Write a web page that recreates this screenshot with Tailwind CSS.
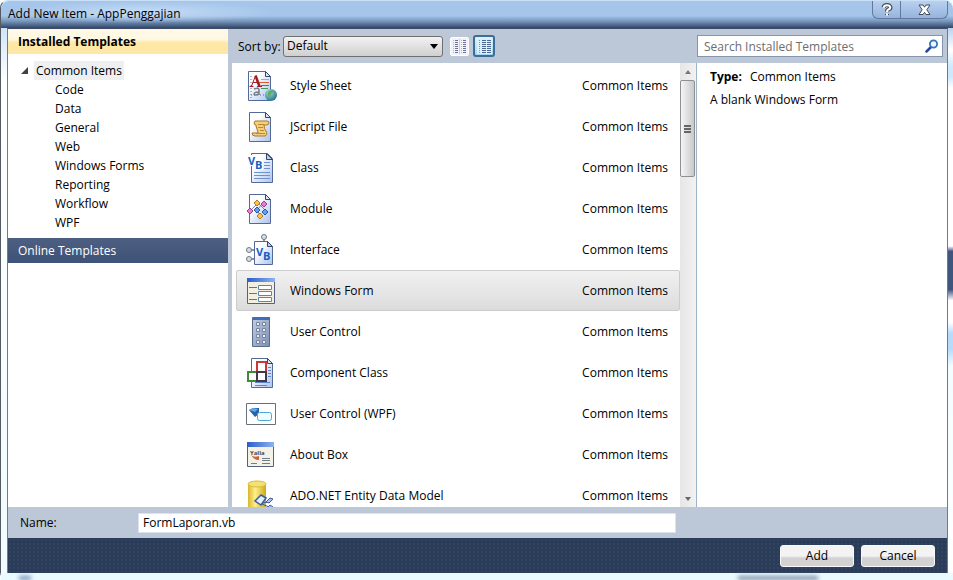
<!DOCTYPE html>
<html lang="en">
  <head>
    <meta charset="UTF-8" />
    <meta name="viewport" content="width=device-width, initial-scale=1.0" />
    <title>Add New Item - AppPenggajian</title>
    <script src="https://cdn.jsdelivr.net/npm/@tailwindcss/browser@4"></script>
  </head>
  <body class="h-screen overflow-hidden bg-[#f4fdff] font-['Open_Sans',sans-serif] text-[12px] leading-[19px] text-black">
    <!-- shared gradients for the file icons -->
    <svg class="absolute" width="0" height="0" aria-hidden="true">
      <defs>
        <linearGradient id="page" x1="0" y1="0" x2="1" y2="1">
          <stop offset="0.3" stop-color="#ffffff" />
          <stop offset="1" stop-color="#a9c2f0" />
        </linearGradient>
        <linearGradient id="bar" x1="0" x2="1">
          <stop offset="0" stop-color="#2b5ccc" />
          <stop offset="1" stop-color="#8db2f3" />
        </linearGradient>
        <linearGradient id="gold" x1="0" x2="1">
          <stop offset="0" stop-color="#d9b72c" />
          <stop offset="0.4" stop-color="#fff08a" />
          <stop offset="1" stop-color="#cda81c" />
        </linearGradient>
        <linearGradient id="steel" x1="0" x2="1" y2="1">
          <stop offset="0" stop-color="#c3cfe2" />
          <stop offset="1" stop-color="#7c8fb4" />
        </linearGradient>
        <radialGradient id="globe" cx="0.35" cy="0.3" r="0.8">
          <stop offset="0" stop-color="#9fe0d2" />
          <stop offset="1" stop-color="#1d6a8c" />
        </radialGradient>
      </defs>
    </svg>

    <div class="flex h-full flex-col rounded-t-lg rounded-bl-lg border-l border-t border-l-[#555a62] border-t-[#c9e0f7]">
      <header class="flex h-[27px] shrink-0 items-start justify-between rounded-t-lg bg-linear-to-b from-[#a5c5ea] from-55% via-[#7895bb] via-75% to-[#314768] pl-[7px] pr-[5px]">
        <h1 class="pr-24 pt-[3px] bg-radial from-[#c5dcf5] to-transparent to-70%">Add New Item - AppPenggajian</h1>
        <div class="flex h-[18px] overflow-hidden rounded-b-md border border-t-0 border-[#60799c] bg-linear-to-b from-[#bad1ee] to-[#95b4dc]">
          <button type="button" aria-label="Help" class="flex w-[28px] items-center justify-center border-r border-[#60799c]">
            <svg width="12" height="14" viewBox="0 0 12 14" fill="none">
              <path d="M2.500 4.500Q3 2 6 2T9.500 4.500Q9.500 6 7.500 6.500Q6 7 6 8.500M6 11v1" stroke="#444b58" stroke-width="4" />
              <path d="M2.500 4.800Q3 2.200 6 2.200T9.300 4.500Q9.300 6 7.300 6.500Q6 7 6 9M6 10.500v2" stroke="#fff" stroke-width="2" />
            </svg>
          </button>
          <button type="button" aria-label="Close" class="flex w-[46px] items-center justify-center">
            <svg width="13" height="12" viewBox="0 0 13 12">
              <path d="M1 1h4l1.500 2.200L8 1h4L8.800 5.800 12 10.500H8L6.500 8.300 5 10.500H1l3.200-4.700z" fill="#fff" stroke="#444b58" />
            </svg>
          </button>
        </div>
      </header>

      <div class="flex min-h-0 grow bg-linear-to-b from-[#cfe5fa] via-white via-10% to-[#f0fcff] pl-[6px]">
        <main class="flex min-w-0 grow flex-col border-x border-t border-x-[#757a82] border-t-[#3b4a66] bg-[#bcc7d8]">
          <div class="flex min-h-0 grow gap-1">
            <!-- template tree -->
            <nav class="flex w-[220px] shrink-0 flex-col bg-white">
              <h2 class="h-[25px] bg-linear-to-b from-[#fff8e4] from-40% to-[#ffe8a6] to-55% pl-[10px] pt-[3px] font-bold">Installed Templates</h2>
              <div class="pb-[6px] pl-[13px] pt-[7px]">
                <div class="flex items-center gap-2">
                  <svg width="7" height="7" viewBox="0 0 7 7"><path d="M7 0v7H0z" fill="#404040" /></svg>
                  <a href="#" class="-ml-[2px] bg-[#efefef] px-[2px]">Common Items</a>
                </div>
                <ul class="pl-[34px]">
                  <li><a href="#">Code</a></li>
                  <li><a href="#">Data</a></li>
                  <li><a href="#">General</a></li>
                  <li><a href="#">Web</a></li>
                  <li><a href="#">Windows Forms</a></li>
                  <li><a href="#">Reporting</a></li>
                  <li><a href="#">Workflow</a></li>
                  <li><a href="#">WPF</a></li>
                </ul>
              </div>
              <button type="button" class="h-[25px] bg-linear-to-b from-[#4d6082] to-[#3f5277] pl-[10px] text-left text-white">Online Templates</button>
            </nav>

            <div class="flex min-w-0 grow flex-col">
              <div class="flex h-[34px] shrink-0 items-center pl-[6px] pr-1">
                <label for="sort" class="w-[45px] whitespace-nowrap">Sort by:</label>
                <div class="relative w-[160px]">
                  <select id="sort" class="block h-[21px] w-full appearance-none rounded-[3px] border border-[#707070] bg-linear-to-b from-[#f2f2f2] to-[#d0d0d0] pl-[3px] leading-[18px]">
                    <option>Default</option>
                  </select>
                  <svg class="pointer-events-none absolute right-[5px] top-[8px]" width="8" height="5" viewBox="0 0 8 5"><path d="M0 0h8L4 5z" /></svg>
                </div>
                <button type="button" aria-label="Small icons" class="ml-[7px] flex h-[19px] w-[19px] items-center justify-center rounded-[2px] border border-white bg-[#f2f3f6]">
                  <svg width="15" height="15" viewBox="0 0 15 15" fill="none" stroke-dasharray="1 1" shape-rendering="crispEdges">
                    <path d="M1.500 1v13M9.500 1v13" stroke="#d9b878" />
                    <path d="M4.500 1v13M12.500 1v13" stroke="#6f6f9c" stroke-width="3" />
                    <path d="M7.500 0v15" stroke="#c9ced9" stroke-dasharray="none" />
                  </svg>
                </button>
                <button type="button" aria-label="Medium icons" aria-pressed="true" class="ml-1 flex h-[22px] w-[22px] items-center justify-center rounded-[3px] border-2 border-[#3a7098] bg-linear-to-b from-[#e2f1fa] to-[#a3d3ee]">
                  <svg width="15" height="15" viewBox="0 0 15 15" fill="none" stroke-dasharray="1 1" shape-rendering="crispEdges">
                    <path d="M0 0h15v15H0z" fill="#dceef8" stroke="none" />
                    <path d="M2.500 1v13" stroke="#7fa07c" />
                    <path d="M6.500 1v13M11.500 1v13" stroke="#4d6a97" stroke-width="4" />
                  </svg>
                </button>
                <div class="relative ml-auto w-[246px]">
                  <input type="search" aria-label="Search Installed Templates" placeholder="Search Installed Templates" class="block h-[22px] w-full border border-[#8595ae] bg-white pl-[6px] pr-7 outline-none placeholder:text-[#6d6d6d]" />
                  <svg class="pointer-events-none absolute right-[4px] top-[4px]" width="14" height="14" viewBox="0 0 14 14" fill="none">
                    <path d="M5.500 8.500L1.500 12.500" stroke="#28489f" stroke-width="2.500" stroke-linecap="round" />
                    <circle cx="8.500" cy="5" r="3.600" stroke="#3272be" stroke-width="1.800" fill="#eef7ff" />
                  </svg>
                </div>
              </div>

              <div class="flex min-h-0 grow bg-white">
                <!-- item list -->
                <ul class="min-w-0 grow overflow-hidden pl-1 pt-[2px]">
                  <li>
                    <button type="button" class="flex h-[41px] w-full items-center rounded-[2px] border border-transparent pl-[9px] pr-[11px] text-left">
                      <svg class="mr-3 shrink-0" width="32" height="32" viewBox="0 0 32 32">
                        <path d="M2.500 1.500h17l5 5v24h-22z" fill="url(#page)" stroke="#546a96" /><path d="M19.500 1.500v5h5z" fill="#dde6f6" stroke="#34466e" />
                        <path d="M5 6v22M5 25h14" stroke="#5c6c90" stroke-dasharray="1 2" fill="none" />
                        <path d="M15 9.500h8" stroke="#d4b320" /><path d="M13 12.500h10" stroke="#e05b2c" /><path d="M15 15.500h8" stroke="#b03ab0" /><path d="M15 18.500h7" stroke="#3f9b4c" />
                        <path d="M5.500 16l4-10" fill="none" stroke="#a01c20" /><path d="M9.500 5.500l4 11" stroke="#a01c20" stroke-width="2.500" /><path d="M7 12.500h5M3.500 16.500h4M11 16.500h5" stroke="#a01c20" />
                        <path d="M8 19q5-2 5 1v5M13 22q-5 0-5 2t5 0" fill="none" stroke="#767c88" stroke-width="1.500" />
                        <circle cx="25" cy="25" r="6" fill="url(#globe)" /><path d="M22 22q3-3 6-1l-3 3-1 4q-3-2-2-6z" fill="#62ae66" />
                      </svg>
                      <span class="grow">Style Sheet</span><span>Common Items</span>
                    </button>
                  </li>
                  <li>
                    <button type="button" class="flex h-[41px] w-full items-center rounded-[2px] border border-transparent pl-[9px] pr-[11px] text-left">
                      <svg class="mr-3 shrink-0" width="32" height="32" viewBox="0 0 32 32">
                        <path d="M3.500 1.500h16l5 5v24h-21z" fill="url(#page)" stroke="#546a96" /><path d="M19.500 1.500v5h5z" fill="#dde6f6" stroke="#34466e" />
                        <path d="M9 10h12q2 0 2 2t-3 2h-2q0 4 2 6 2 4-1 5H9q-3 0-3-3h6q0-2-1-4t-1-4H9q-2-2 0-4z" fill="#f7cf78" stroke="#a97824" />
                        <path d="M12 13.500h6M12 16.500h5M14 19.500h4M10 22.500h9" stroke="#b98632" />
                      </svg>
                      <span class="grow">JScript File</span><span>Common Items</span>
                    </button>
                  </li>
                  <li>
                    <button type="button" class="flex h-[41px] w-full items-center rounded-[2px] border border-transparent pl-[9px] pr-[11px] text-left">
                      <svg class="mr-3 shrink-0" width="32" height="32" viewBox="0 0 32 32">
                        <path d="M5.500 1.500h16l5 5v24h-21z" fill="url(#page)" stroke="#546a96" /><path d="M20.500 1.500v6h6z" fill="#c4cede" stroke="#34466e" />
                        <path d="M18 10.500h6M18 13.500h6M18 16.500h6M8 20.500h16M8 23.500h16M8 26.500h16" stroke="#6f91ce" />
                        <path d="M2 3h9v5h6v10H8v-4H3z" fill="#fff" />
                        <text x="2" y="13" font-size="11" font-weight="bold" fill="#1661c0">V</text><text x="9" y="17" font-size="11" font-weight="bold" fill="#1661c0">B</text>
                      </svg>
                      <span class="grow">Class</span><span>Common Items</span>
                    </button>
                  </li>
                  <li>
                    <button type="button" class="flex h-[41px] w-full items-center rounded-[2px] border border-transparent pl-[9px] pr-[11px] text-left">
                      <svg class="mr-3 shrink-0" width="32" height="32" viewBox="0 0 32 32">
                        <path d="M3.500 1.500h16l5 5v24h-21z" fill="url(#page)" stroke="#546a96" /><path d="M19.500 1.500v5h5z" fill="#dde6f6" stroke="#34466e" />
                        <path d="M4 18l8-8 9 9M11 17l6-7M10 15l5 9" stroke="#7486a8" fill="none" />
                        <path d="M11 7l3 3-3 3-3-3z" fill="#ffc24e" stroke="#b77a1c" /><path d="M4 15l3 3-3 3-3-3z" fill="#e77bd5" stroke="#9c3b94" />
                        <path d="M18 8l3 3-3 3-3-3z" fill="#e77bd5" stroke="#9c3b94" /><path d="M11 14l3 3-3 3-3-3z" fill="#62a0ed" stroke="#2559a8" />
                        <path d="M19 16l3 3-3 3-3-3z" fill="#62a0ed" stroke="#2559a8" /><path d="M14 20l3 3-3 3-3-3z" fill="#ffc24e" stroke="#b77a1c" />
                      </svg>
                      <span class="grow">Module</span><span>Common Items</span>
                    </button>
                  </li>
                  <li>
                    <button type="button" class="flex h-[41px] w-full items-center rounded-[2px] border border-transparent pl-[9px] pr-[11px] text-left">
                      <svg class="mr-3 shrink-0" width="32" height="32" viewBox="0 0 32 32">
                        <path d="M18 4v5M4 16h6M4 25h6" stroke="#657082" stroke-width="1.500" />
                        <path d="M8.500 7.500h13l5 5v18h-18z" fill="url(#page)" stroke="#546a96" /><path d="M21.500 7.500v5h5z" fill="#c4cede" stroke="#34466e" />
                        <circle cx="18" cy="3" r="2.500" fill="#d9dee5" stroke="#6f7887" /><circle cx="3" cy="16" r="2.500" fill="#d9dee5" stroke="#6f7887" /><circle cx="3" cy="25" r="2.500" fill="#d9dee5" stroke="#6f7887" />
                        <text x="10" y="22" font-size="11" font-weight="bold" fill="#1661c0">V</text><text x="17" y="26" font-size="11" font-weight="bold" fill="#1661c0">B</text>
                      </svg>
                      <span class="grow">Interface</span><span>Common Items</span>
                    </button>
                  </li>
                  <li>
                    <button type="button" aria-current="true" class="flex h-[41px] w-full items-center rounded-[2px] border border-[#cccccc] bg-linear-to-b from-[#f1f1f1] to-[#dcdcdc] pl-[9px] pr-[11px] text-left">
                      <svg class="mr-3 shrink-0" width="32" height="32" viewBox="0 0 32 32">
                        <path d="M1.500 3.500h27v25h-27z" fill="#f2efe2" stroke="#53627e" /><path d="M1 3h28v4H1z" fill="url(#bar)" />
                        <path d="M3 12.500h8M3 18.500h8M3 24.500h8" stroke="#6b7280" />
                        <path d="M12.500 10.500h13v4h-13zM12.500 16.500h13v4h-13zM12.500 22.500h13v4h-13z" fill="#fff" stroke="#5c87a5" />
                      </svg>
                      <span class="grow">Windows Form</span><span>Common Items</span>
                    </button>
                  </li>
                  <li>
                    <button type="button" class="flex h-[41px] w-full items-center rounded-[2px] border border-transparent pl-[9px] pr-[11px] text-left">
                      <svg class="mr-3 shrink-0" width="32" height="32" viewBox="0 0 32 32">
                        <path d="M6.500 1.500h17v29h-17z" fill="url(#steel)" stroke="#596b8a" /><path d="M7 1h17v3H7z" fill="#3e6cc0" />
                        <g fill="#eef2f9" stroke="#7383a0">
                          <path d="M10.500 6.500h3v3h-3zM16.500 6.500h3v3h-3zM10.500 12.500h3v3h-3zM16.500 12.500h3v3h-3z" />
                          <path d="M10.500 18.500h3v3h-3zM16.500 18.500h3v3h-3zM10.500 24.500h3v3h-3zM16.500 24.500h3v3h-3z" />
                        </g>
                      </svg>
                      <span class="grow">User Control</span><span>Common Items</span>
                    </button>
                  </li>
                  <li>
                    <button type="button" class="flex h-[41px] w-full items-center rounded-[2px] border border-transparent pl-[9px] pr-[11px] text-left">
                      <svg class="mr-3 shrink-0" width="32" height="32" viewBox="0 0 32 32">
                        <path d="M5.500 1.500h16l5 5v24h-21z" fill="url(#page)" stroke="#546a96" /><path d="M21.500 1.500v5h5z" fill="#dde6f6" stroke="#34466e" />
                        <path d="M22 10.500h3M22 13.500h3M22 16.500h3M22 19.500h3M9 25.500h15M9 28.500h12" stroke="#5f86cb" />
                        <path d="M11 5h9v10h-9z" fill="#fff" stroke="#c93a36" stroke-width="2" />
                        <path d="M2 15h9v9H2z" fill="#fff" stroke="#3f8a37" stroke-width="2" /><path d="M11 15h9v9h-9z" fill="#fff" stroke="#41384b" stroke-width="2" />
                      </svg>
                      <span class="grow">Component Class</span><span>Common Items</span>
                    </button>
                  </li>
                  <li>
                    <button type="button" class="flex h-[41px] w-full items-center rounded-[2px] border border-transparent pl-[9px] pr-[11px] text-left">
                      <svg class="mr-3 shrink-0" width="32" height="32" viewBox="0 0 32 32">
                        <path d="M.5 5.500h29v21H.5z" fill="#fff" stroke="#697079" />
                        <path d="M3 12l4-2h6v6l-4 3z" fill="#2460b0" /><path d="M3 12l4-2 5 1-3 3z" fill="#68a5e4" />
                        <rect x="11.500" y="14.500" width="14" height="8" rx="2" fill="#eefbff" stroke="#4ba8d5" />
                      </svg>
                      <span class="grow">User Control (WPF)</span><span>Common Items</span>
                    </button>
                  </li>
                  <li>
                    <button type="button" class="flex h-[41px] w-full items-center rounded-[2px] border border-transparent pl-[9px] pr-[11px] text-left">
                      <svg class="mr-3 shrink-0" width="32" height="32" viewBox="0 0 32 32">
                        <path d="M1.500 3.500h26v24h-26z" fill="#f4f1e6" stroke="#53627e" /><path d="M1 3h27v5H1z" fill="url(#bar)" />
                        <text x="4" y="16" font-size="6" font-weight="bold" fill="#5c4438">Yalla</text>
                        <path d="M5 16q3 3 8 1v4q-5 0-8-5z" fill="#cb6238" />
                        <path d="M5 24.500h6M16 19.500h8M16 21.500h8M16 24.500h8" stroke="#737b88" />
                      </svg>
                      <span class="grow">About Box</span><span>Common Items</span>
                    </button>
                  </li>
                  <li>
                    <button type="button" class="flex h-[41px] w-full items-center rounded-[2px] border border-transparent pl-[9px] pr-[11px] text-left">
                      <svg class="mr-3 shrink-0" width="32" height="32" viewBox="0 0 32 32">
                        <path d="M2 4v24q9 6 18 0V4z" fill="url(#gold)" /><ellipse cx="11" cy="4" rx="9" ry="3" fill="#f3e170" stroke="#d6bb3c" />
                        <path d="M15 15l5 3-5 7-6-4z" fill="#e4eefc" stroke="#3d5c98" stroke-width="1.500" /><path d="M24 18l3 1-4 4-3-1z" fill="#a9c4f0" stroke="#3d5c98" /><path d="M24 25l3 2-3 2-2-2z" fill="#a9c4f0" stroke="#3d5c98" /><path d="M17 23l4-1M16 24l7 3" stroke="#3d5c98" />
                      </svg>
                      <span class="grow">ADO.NET Entity Data Model</span><span>Common Items</span>
                    </button>
                  </li>
                </ul>

                <div class="flex w-[17px] shrink-0 flex-col border-r border-[#9eb4ca] bg-linear-to-r from-[#e6e6e6] to-[#f2f2f2]">
                  <button type="button" aria-label="Scroll up" class="flex h-[17px] items-center justify-center"><svg width="6" height="4" viewBox="0 0 6 4"><path d="M0 4h6L3 0z" fill="#777" /></svg></button>
                  <div class="mr-px flex h-[97px] flex-col items-center justify-center gap-px rounded-[2px] border border-[#8c8f94] bg-linear-to-r from-[#f5f5f5] to-[#c9c9cb]">
                    <span class="h-[2px] w-[7px] bg-[#666]"></span>
                    <span class="h-[2px] w-[7px] bg-[#666]"></span>
                    <span class="h-[2px] w-[7px] bg-[#666]"></span>
                  </div>
                  <button type="button" aria-label="Scroll down" class="mt-auto flex h-[17px] items-center justify-center"><svg width="6" height="4" viewBox="0 0 6 4"><path d="M0 0h6L3 4z" fill="#666" /></svg></button>
                </div>

                <section class="w-[250px] shrink-0 pl-[13px] pt-[4px]">
                  <p><b class="mr-2">Type:</b>Common Items</p>
                  <p class="mt-1">A blank Windows Form</p>
                </section>
              </div>
            </div>
          </div>

          <div class="flex h-[31px] shrink-0 items-center pl-3">
            <label for="name" class="w-[118px]">Name:</label>
            <input id="name" type="text" value="FormLaporan.vb" class="h-[20px] w-[58%] border border-[#dde3ec] bg-white pl-1 outline-none" />
          </div>

          <footer class="flex h-[35px] shrink-0 items-center justify-end gap-[7px] bg-[#2b3c59] bg-[radial-gradient(#304362_1px,transparent_1px)] bg-size-[4px_4px] pr-3">
            <button type="button" class="h-[22px] w-[74px] rounded-[3px] border border-[#f8f8f8] bg-linear-to-b from-[#f3f3f3] from-50% to-[#d2d2d2] to-60% leading-[18px]">Add</button>
            <button type="button" class="h-[22px] w-[74px] rounded-[3px] border border-[#f8f8f8] bg-linear-to-b from-[#f3f3f3] from-50% to-[#d2d2d2] to-60% leading-[18px]">Cancel</button>
          </footer>
        </main>
        <!-- blurred desktop seen through the glass frame -->
        <div class="w-[5px] shrink-0 bg-[linear-gradient(to_bottom,#b9d4ef_0,#fff_4%,#cfe9fb_7%,#cfe9fb_9%,#fff_11%,#fff_40%,#3f5680_41%,#3f5680_48%,#fff_50%,#fff_54%,#b7dbfa_56%,#b7dbfa_59%,#f2fdff_62%,#fff_100%)]"></div>
      </div>
      <div class="flex h-[7px] shrink-0 items-end bg-[#e9fbff] pl-[18px]">
        <span class="h-1 w-3 bg-[#7792b7] blur-[2px]"></span>
        <span class="ml-auto mr-[135px] h-1 w-20 bg-[#7e8fa6] blur-[2px]"></span>
      </div>
    </div>
  </body>
</html>
